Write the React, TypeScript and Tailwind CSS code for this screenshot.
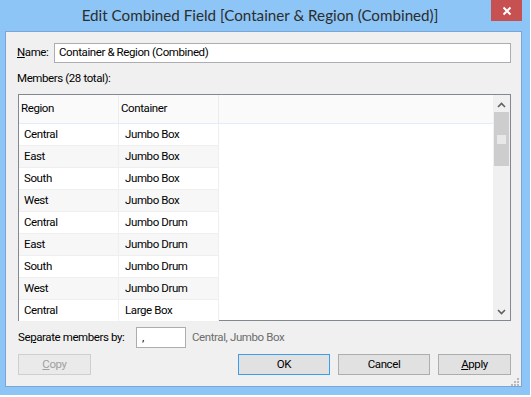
import React from 'react';

const rows: [string, string][] = [
  ['Central', 'Jumbo Box'],
  ['East', 'Jumbo Box'],
  ['South', 'Jumbo Box'],
  ['West', 'Jumbo Box'],
  ['Central', 'Jumbo Drum'],
  ['East', 'Jumbo Drum'],
  ['South', 'Jumbo Drum'],
  ['West', 'Jumbo Drum'],
  ['Central', 'Large Box'],
];

function Chevron({ down }: { down?: boolean }) {
  return (
    <svg width="9" height="6" viewBox="0 0 9 6" className={down ? 'rotate-180' : ''}>
      <path d="M1 5 L4.5 1.5 L8 5" fill="none" stroke="#606060" strokeWidth="1.6" />
    </svg>
  );
}

function Grip() {
  return (
    <svg width="8" height="8" viewBox="0 0 8 8">
      {[
        [6, 0],
        [3, 3],
        [6, 3],
        [0, 6],
        [3, 6],
        [6, 6],
      ].map(([x, y]) => (
        <rect key={`${x}-${y}`} x={x} y={y} width="2" height="2" fill="#b8b8b8" />
      ))}
    </svg>
  );
}

function Button({ children, primary, disabled }: { children: React.ReactNode; primary?: boolean; disabled?: boolean }) {
  return (
    <div
      className={`h-[21px] flex items-center justify-center border ${
        primary
          ? 'border-[#3c9ee8] bg-[#e1e1e1]'
          : disabled
            ? 'border-[#cfcfcf] bg-[#eaeaea] text-[#a0a0a0]'
            : 'border-[#adadad] bg-[#e1e1e1]'
      }`}
    >
      {children}
    </div>
  );
}

export default function App() {
  return (
    <div
      className="w-[531px] h-[397px] bg-white overflow-hidden text-[11.5px] tracking-[-0.4px] text-black whitespace-nowrap"
      style={{ fontFamily: 'Roboto, "Open Sans", sans-serif' }}
    >
      <div className="w-[530px] h-[395px] bg-[#8cc5f6] flex flex-col">
        {/* title bar */}
        <div className="h-[31px] relative flex items-center justify-center shrink-0">
          <span className="text-[15.2px] tracking-normal text-[#2d2d2d] pr-[10px] pb-[1px]" style={{ fontFamily: 'Lato, sans-serif' }}>
            Edit Combined Field [Container &amp; Region (Combined)]
          </span>
          <div className="absolute top-0 right-[8px] w-[31px] h-[21px] bg-[#c75050] flex items-center justify-center">
            <svg width="10" height="10" viewBox="0 0 10 10">
              <path d="M1.5 1.5 L8.5 8.5 M8.5 1.5 L1.5 8.5" stroke="white" strokeWidth="2" />
            </svg>
          </div>
        </div>

        {/* client area */}
        <div className="ml-[5px] mr-[8px] h-[356px] bg-[#f0f0f0] border border-[#79a6d6] flex flex-col pl-[11px] pr-[10px]">
          <div className="flex items-center mt-[11px] h-[20px]">
            <span className="w-[37px]">
              <span className="underline">N</span>ame:
            </span>
            <div className="flex-1 h-[20px] bg-white border border-[#abadb3] flex items-center pl-[4px]">
              Container &amp; Region (Combined)
            </div>
          </div>

          <div className="mt-[7px] h-[18px] flex items-center">Members (28 total):</div>

          {/* member grid */}
          <div className="mt-[6px] ml-[1px] h-[227px] border border-[#828790] bg-white flex">
            <div className="flex-1 flex flex-col">
              <div className="h-[29px] bg-[#fafafa] border-b border-[#e3edf9] flex shrink-0">
                <div className="w-[100px] border-r border-[#ececec] flex items-center pl-[2px]">Region</div>
                <div className="w-[100px] border-r border-[#ececec] flex items-center pl-[2px]">Container</div>
              </div>
              {rows.map(([region, container], i) => (
                <div
                  key={i}
                  className={`h-[22px] flex w-[200px] shrink-0 border-b border-[#efefef] ${i % 2 ? 'bg-[#f7f7f7]' : 'bg-white'}`}
                >
                  <div className="w-[100px] border-r border-[#efefef] flex items-center pl-[5px]">{region}</div>
                  <div className="w-[100px] border-r border-[#efefef] flex items-center pl-[6px]">{container}</div>
                </div>
              ))}
            </div>
            <div className="w-[17px] bg-[#f0f0f0] flex flex-col items-center">
              <div className="h-[17px] flex items-center justify-center pt-[2px]">
                <Chevron />
              </div>
              <div className="w-[15px] h-[54px] bg-[#cdcdcd] flex items-center justify-center">
                <div className="w-[9px] h-[9px] bg-[#e8e8e8]" />
              </div>
              <div className="flex-1" />
              <div className="h-[17px] flex items-center justify-center">
                <Chevron down />
              </div>
            </div>
          </div>

          <div className="mt-[6px] h-[21px] flex items-center">
            <span className="w-[118px] ml-[1px]">
              Se<span className="underline">p</span>arate members by:
            </span>
            <div className="w-[50px] h-[21px] bg-white border border-[#abadb3] flex items-center pl-[5px]">,</div>
            <span className="ml-[6px] text-[#6d6d6d]">Central, Jumbo Box</span>
          </div>

          <div className="mt-[6px] flex items-center">
            <div className="w-[73px] ml-[1px]">
              <Button disabled>
                <span className="underline">C</span>opy
              </Button>
            </div>
            <div className="flex-1" />
            <div className="w-[92px]">
              <Button primary>OK</Button>
            </div>
            <div className="w-[92px] ml-[8px]">
              <Button>Cancel</Button>
            </div>
            <div className="w-[73px] ml-[8px]">
              <Button>
                <span className="underline">A</span>pply
              </Button>
            </div>
          </div>

          <div className="flex justify-end mt-[3px] mr-[-8px]">
            <Grip />
          </div>
        </div>
      </div>
    </div>
  );
}
